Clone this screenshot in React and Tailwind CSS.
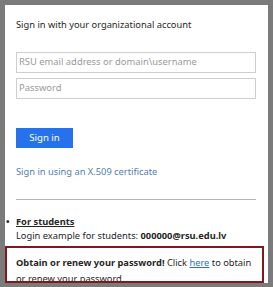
export default function App() {
  return (
    <div className="w-[273px] h-[287px] bg-[#7b7b7b] pt-[5px] pl-[5px] pr-[5px] pb-[4px] font-['Noto_Sans',sans-serif]">
      <div className="h-full flex flex-col bg-white overflow-hidden">
        <div className="pl-[11px] pr-[12px]">
          <p className="pt-[13px] text-[9.3px] leading-[14px] text-[#262626]">
            Sign in with your organizational account
          </p>

          <div className="mt-[20px] h-[21px] border border-[#cfcfcf] flex items-center px-[2px] text-[9.4px] text-[#9a9a9a]">
            RSU email address or domain\username
          </div>
          <div className="mt-[5px] h-[21px] border border-[#cfcfcf] flex items-center px-[2px] text-[9.4px] text-[#9a9a9a]">
            Password
          </div>

          <button className="mt-[29px] w-[57px] h-[20px] bg-[#2672ec] text-white text-[9.6px] leading-[20px] block">
            Sign in
          </button>

          <p className="mt-[17px] text-[9.3px] leading-[14px] text-[#4f7db5]">
            Sign in using an X.509 certificate
          </p>

          <div className="mt-[20px] h-px bg-[#b5b5b5]" />
        </div>

        <div className="relative pl-[11px] mt-[15px] text-[9.3px] leading-[14px] text-[#262626]">
          <span className="absolute left-[1px] top-0 font-bold">•</span>
          <p className="font-bold underline">For students</p>
          <p>
            Login example for students: <span className="font-bold">000000@rsu.edu.lv</span>
          </p>
        </div>

        <div className="mt-[3px] mr-[4px] flex-1 overflow-hidden border-2 border-[#7d1a1f] pl-[9px] pr-[4px] pt-[7px] text-[9.3px] leading-[16px] text-[#262626]">
          <span className="font-bold">Obtain or renew your password!</span> Click{" "}
          <span className="text-[#2a6fd6] underline">here</span> to obtain or renew your password.
        </div>
      </div>
    </div>
  );
}
